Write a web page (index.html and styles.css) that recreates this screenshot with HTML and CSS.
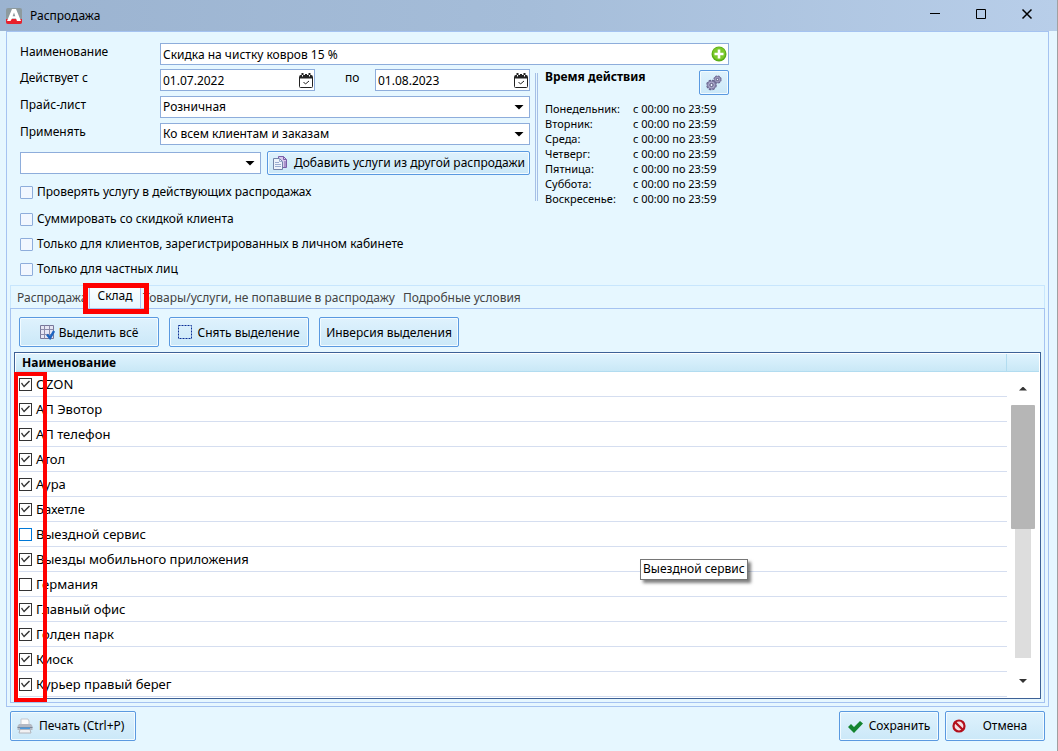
FILE: index.html
```
<!DOCTYPE html>
<html lang="ru">

<head>
    <meta charset="UTF-8">
    <meta name="viewport" content="width=device-width, initial-scale=1.0">
    <link rel="stylesheet" href="styles.css">
    <title>Распродажа</title>
</head>

<body>

    <header class="titlebar">
        <svg class="app-icon" width="16" height="16" viewBox="0 0 16 16">
            <rect width="16" height="16" rx="2" fill="#8d9a9e" />
            <path d="M0 11h16v3a2 2 0 0 1-2 2H2a2 2 0 0 1-2-2z" fill="#e8202c" />
            <path d="M6 1h4l5 12h-4l-1-2.500H6L4.500 13H1z" fill="#fff" />
            <path d="M8 4.500L9.300 8.300H6.600z" fill="#8d9a9e" />
        </svg>
        <h1>Распродажа</h1>
        <div class="window-buttons">
            <button type="button" aria-label="Свернуть">
                <svg width="12" height="12" viewBox="0 0 12 12"><path d="M1 5.500h10" stroke="#000" /></svg>
            </button>
            <button type="button" aria-label="Развернуть">
                <svg width="12" height="12" viewBox="0 0 12 12"><path d="M1.500 1.500h9v9h-9z" fill="none" stroke="#000" /></svg>
            </button>
            <button type="button" aria-label="Закрыть">
                <svg width="12" height="12" viewBox="0 0 12 12"><path d="M1.500 1.500l9 9M10.500 1.500l-9 9" stroke="#000" stroke-width="1.500" /></svg>
            </button>
        </div>
    </header>

    <main class="panel">
        <form class="sale-form">
            <div class="row row-name">
                <label class="caption" for="saleName">Наименование</label>
                <div class="field field-name">
                    <input type="text" id="saleName" value="Скидка на чистку ковров 15 %">
                    <button type="button" class="field-btn" aria-label="Добавить">
                        <svg width="16" height="16" viewBox="0 0 16 16">
                            <circle cx="8" cy="8" r="7.500" fill="#59ae16" />
                            <circle cx="8" cy="7.500" r="6.300" fill="#7cc92b" />
                            <path d="M8 3.500v9M3.500 8h9" stroke="#fff" stroke-width="2.600" />
                        </svg>
                    </button>
                </div>
            </div>

            <div class="form-columns">
                <div class="form-left">
                    <div class="row">
                        <label class="caption" for="dateFrom">Действует с</label>
                        <div class="field field-date">
                            <input type="text" id="dateFrom" value="01.07.2022">
                            <button type="button" class="field-btn" aria-label="Выбрать дату">
                                <svg width="14" height="15" viewBox="0 0 14 15">
                                    <path d="M1.500 2.500h11q1 0 1 1v10q0 1-1 1h-11q-1 0-1-1v-10q0-1 1-1z" fill="#fff" stroke="#222" />
                                    <path d="M1 2.500h12v3H1z" fill="#222" />
                                    <path d="M3.500 0v3.500M10.500 0v3.500M7 1v2" stroke="#222" stroke-width="2" />
                                    <path d="M3.500 2v1.500M10.500 2v1.500" stroke="#fff" />
                                    <path d="M4.500 9l2 2L10 8" fill="none" stroke="#222" />
                                </svg>
                            </button>
                        </div>
                        <label class="to" for="dateTo">по</label>
                        <div class="field field-date">
                            <input type="text" id="dateTo" value="01.08.2023">
                            <button type="button" class="field-btn" aria-label="Выбрать дату">
                                <svg width="14" height="15" viewBox="0 0 14 15">
                                    <path d="M1.500 2.500h11q1 0 1 1v10q0 1-1 1h-11q-1 0-1-1v-10q0-1 1-1z" fill="#fff" stroke="#222" />
                                    <path d="M1 2.500h12v3H1z" fill="#222" />
                                    <path d="M3.500 0v3.500M10.500 0v3.500M7 1v2" stroke="#222" stroke-width="2" />
                                    <path d="M3.500 2v1.500M10.500 2v1.500" stroke="#fff" />
                                    <path d="M4.500 9l2 2L10 8" fill="none" stroke="#222" />
                                </svg>
                            </button>
                        </div>
                    </div>
                    <div class="row">
                        <label class="caption" for="priceList">Прайс-лист</label>
                        <div class="field field-select">
                            <select id="priceList">
                                <option>Розничная</option>
                            </select>
                        </div>
                    </div>
                    <div class="row">
                        <label class="caption" for="applyTo">Применять</label>
                        <div class="field field-select">
                            <select id="applyTo">
                                <option>Ко всем клиентам и заказам</option>
                            </select>
                        </div>
                    </div>
                    <div class="row row-copy">
                        <div class="field field-select">
                            <select aria-label="Распродажа">
                                <option></option>
                            </select>
                        </div>
                        <button type="button" class="btn btn-copy">
                            <svg width="16" height="16" viewBox="0 0 16 16">
                                <path d="M6.500 1.500h5l3 3v8h-8z" fill="#d9c9ee" stroke="#7a5fa8" />
                                <path d="M11.500 1.500v3h3M12 7h2M12 9h2M12 11h2" fill="none" stroke="#7a5fa8" />
                                <path d="M1.500 3.500h6l3 3v8h-9z" fill="#edf3fb" stroke="#7384a8" />
                                <path d="M7.500 3.500v3h3M3 7.500h4M3 9.500h6M3 11.500h6" fill="none" stroke="#9aacd0" />
                            </svg>
                            Добавить услуги из другой распродажи
                        </button>
                    </div>

                    <div class="options">
                        <label><input type="checkbox">Проверять услугу в действующих распродажах</label>
                        <label><input type="checkbox">Суммировать со скидкой клиента</label>
                        <label><input type="checkbox">Только для клиентов, зарегистрированных в личном кабинете</label>
                        <label><input type="checkbox">Только для частных лиц</label>
                    </div>
                </div>

                <section class="schedule">
                    <div class="schedule-head">
                        <h2>Время действия</h2>
                        <button type="button" class="btn btn-gear" aria-label="Настроить время">
                            <svg width="16" height="16" viewBox="0 0 16 16">
                                <circle cx="5.500" cy="10" r="4" fill="none" stroke="#66638c" stroke-width="2.600" stroke-dasharray="2.200 .940" />
                                <circle cx="5.500" cy="10" r="4" fill="#aaa7ca" stroke="#7b78a0" />
                                <circle cx="5.500" cy="10" r="1.600" fill="#eef4ff" stroke="#55527a" />
                                <circle cx="11.500" cy="4.500" r="3" fill="none" stroke="#66638c" stroke-width="2.200" stroke-dasharray="1.700 .650" />
                                <circle cx="11.500" cy="4.500" r="3" fill="#aaa7ca" stroke="#7b78a0" />
                                <circle cx="11.500" cy="4.500" r="1.200" fill="#eef4ff" stroke="#55527a" />
                            </svg>
                        </button>
                    </div>
                    <dl>
                        <dt>Понедельник:</dt><dd>с 00:00 по 23:59</dd>
                        <dt>Вторник:</dt><dd>с 00:00 по 23:59</dd>
                        <dt>Среда:</dt><dd>с 00:00 по 23:59</dd>
                        <dt>Четверг:</dt><dd>с 00:00 по 23:59</dd>
                        <dt>Пятница:</dt><dd>с 00:00 по 23:59</dd>
                        <dt>Суббота:</dt><dd>с 00:00 по 23:59</dd>
                        <dt>Воскресенье:</dt><dd>с 00:00 по 23:59</dd>
                    </dl>
                </section>
            </div>
        </form>

        <div class="tabs" role="tablist">
            <button type="button" class="tab tab-first" role="tab">Распродажа</button>
            <div class="tab-marked">
                <button type="button" class="tab active" role="tab" aria-selected="true">Склад</button>
                <span class="mark"></span>
            </div>
            <button type="button" class="tab tab-goods" role="tab">Товары/услуги, не попавшие в распродажу</button>
            <button type="button" class="tab" role="tab">Подробные условия</button>
        </div>

        <section class="tab-page">
            <div class="toolbar">
                <button type="button" class="btn">
                    <svg width="15" height="15" viewBox="0 0 15 15">
                        <path d="M.5.500h13v13H.5z" fill="#e6e6f4" stroke="#77779a" />
                        <path d="M.5 4.500h13M.5 9.500h13M4.500.500v13M9.500.500v13" stroke="#8c8cab" />
                        <path d="M7 9.500l3 3.500 4-7" fill="none" stroke="#1c64c0" stroke-width="2.500" />
                    </svg>
                    Выделить всё
                </button>
                <button type="button" class="btn">
                    <svg width="15" height="15" viewBox="0 0 15 15">
                        <path d="M.5.500h13v13H.5z" fill="none" stroke="#0b2f96" stroke-dasharray="2 1" />
                    </svg>
                    Снять выделение
                </button>
                <button type="button" class="btn">Инверсия выделения</button>
            </div>

            <div class="list">
                <div class="list-head">
                    <span>Наименование</span>
                </div>
                <div class="list-body">
                    <ul>
                        <li><label><input type="checkbox" checked>OZON</label></li>
                        <li><label><input type="checkbox" checked>АП Эвотор</label></li>
                        <li><label><input type="checkbox" checked>АП телефон</label></li>
                        <li><label><input type="checkbox" checked>Атол</label></li>
                        <li><label><input type="checkbox" checked>Аура</label></li>
                        <li><label><input type="checkbox" checked>Бахетле</label></li>
                        <li><label><input type="checkbox" class="current">Выездной сервис</label></li>
                        <li><label><input type="checkbox" checked>Выезды мобильного приложения</label></li>
                        <li><label><input type="checkbox">Германия</label></li>
                        <li><label><input type="checkbox" checked>Главный офис</label></li>
                        <li><label><input type="checkbox" checked>Голден парк</label></li>
                        <li><label><input type="checkbox" checked>Киоск</label></li>
                        <li><label><input type="checkbox" checked>Курьер правый берег</label></li>
                    </ul>
                    <div class="scrollbar">
                        <button type="button" class="scroll-up" aria-label="Вверх"></button>
                        <div class="track"><div class="thumb"></div></div>
                        <button type="button" class="scroll-down" aria-label="Вниз"></button>
                    </div>
                    <span class="mark"></span>
                    <div class="tooltip" role="tooltip">Выездной сервис</div>
                </div>
            </div>
        </section>
    </main>

    <footer class="actions">
        <button type="button" class="btn btn-print">
            <svg width="16" height="16" viewBox="0 0 16 16">
                <path d="M4 1h7l1 2v4H4z" fill="#fbfbfb" stroke="#c5c9d0" />
                <path d="M2 6h12l1.500 2v4H.5V8z" fill="#b4b9c3" />
                <path d="M.5 9h15v1H.5z" fill="#7d8798" />
                <path d="M3 9.500h10v1.500H3z" fill="#4d9be0" />
                <path d="M3 11.500h10l1 3.500H2z" fill="#f1f1f3" stroke="#b0b4bc" />
            </svg>
            Печать (Ctrl+P)
        </button>
        <button type="button" class="btn btn-save">
            <svg width="15" height="15" viewBox="0 0 15 15">
                <path d="M0 8l3-3 3 3 6-6 3 2.500L6 14z" fill="#148430" />
            </svg>
            Сохранить
        </button>
        <button type="button" class="btn btn-cancel">
            <svg width="14" height="14" viewBox="0 0 14 14">
                <circle cx="7" cy="7" r="5.500" fill="#f6dfe2" stroke="#b3101c" stroke-width="2.200" />
                <path d="M3.200 3.200l7.600 7.600" stroke="#b3101c" stroke-width="2.200" />
            </svg>
            <span>Отмена</span>
        </button>
    </footer>

</body>

</html>
```
FILE: styles.css
```
* {
    box-sizing: border-box;
}

body {
    font-family: "Noto Sans", "Open Sans", sans-serif;
    font-size: 12px;
    line-height: 16px;
    margin: 0;
    height: 100vh;
    display: flex;
    flex-direction: column;
    background-color: #e6f7ff;
    color: #000;
    border-right: 1px solid #a0a0a0;
    overflow: hidden;
}

button,
input,
select {
    font: inherit;
    color: inherit;
    margin: 0;
}

button {
    padding: 0;
    border: none;
    background: none;
}

svg {
    display: block;
    flex: none;
}

/* title bar */

.titlebar {
    display: flex;
    align-items: center;
    flex: none;
    height: 31px;
    padding-left: 6px;
    background: linear-gradient(to right, #9bb3d0, #a5bdd9 50%, #b8cee9);
}

.titlebar h1 {
    flex: 1;
    margin: 0 0 0 8px;
    font-size: 12px;
    font-weight: normal;
}

.window-buttons {
    display: flex;
    padding: 0 7px 4px 0;
}

.window-buttons button {
    display: flex;
    justify-content: center;
    width: 46px;
}

/* main panel */

.panel {
    flex: 1;
    min-height: 0;
    display: flex;
    flex-direction: column;
    margin: 0 8px 0 6px;
    padding: 0 3px 3px;
    border: 1px solid #a5c3f1;
}

.sale-form {
    padding: 11px 0 0 10px;
}

.row {
    display: flex;
    align-items: center;
    margin-bottom: 5px;
}

.row-name {
    margin-bottom: 4px;
}

.caption {
    width: 140px;
    padding-bottom: 4px;
}

.field {
    position: relative;
    display: flex;
    align-items: center;
    height: 22px;
    border: 1px solid #8eaddb;
    background-color: #fff;
}

.field input,
.field select {
    flex: 1;
    min-width: 0;
    height: 20px;
    padding: 0 2px;
    border: none;
    outline: none;
    background: none;
    appearance: none;
}

.field-btn {
    padding: 0 1px;
}

.field-name {
    width: 569px;
}

.field-date {
    width: 155px;
}

.field-select {
    flex: 1;
}

.field-select::after {
    content: "";
    position: absolute;
    right: 5px;
    width: 10px;
    height: 5px;
    background-color: #000;
    clip-path: polygon(0 0, 100% 0, 50% 100%);
    pointer-events: none;
}

.to {
    width: 60px;
    padding: 0 0 4px 30px;
}

.form-columns {
    display: flex;
    align-items: flex-start;
}

.form-left {
    width: 510px;
}

.row-copy {
    gap: 6px;
    margin-top: 6px;
}

.row-copy .field {
    flex: none;
    width: 241px;
}

.schedule {
    width: 194px;
    margin: 4px 0 0 5px;
    padding-left: 7px;
    height: 128px;
    border-left: 3px double #a5bfe6;
}

.schedule-head {
    display: flex;
    justify-content: space-between;
    align-items: flex-start;
    height: 28px;
}

.schedule h2 {
    margin: -4px 0 0;
    font-size: 12px;
    line-height: 16px;
}

.schedule dl {
    display: grid;
    grid-template-columns: 88px 1fr;
    font-size: 11px;
    line-height: 15px;
    margin: 0;
}

.schedule dd {
    margin: 0;
}

/* buttons */

.btn {
    display: flex;
    align-items: center;
    justify-content: center;
    gap: 4px;
    height: 30px;
    border: 1px solid #5a99e0;
    border-radius: 2px;
    background: linear-gradient(#dff2fd, #cbe8f8);
    box-shadow: inset 0 0 0 1px #f2fbff;
    white-space: nowrap;
}

.btn-copy {
    flex: 1;
    height: 24px;
    gap: 6px;
}

.btn-gear {
    width: 30px;
    height: 25px;
    margin-top: -3px;
}

/* check boxes */

input[type="checkbox"] {
    appearance: none;
    flex: none;
    width: 13px;
    height: 13px;
    border: 1px solid #333;
    background-color: #fff;
}

input[type="checkbox"]:checked::before {
    content: "";
    display: block;
    width: 11px;
    height: 11px;
    background-color: #333;
    clip-path: polygon(1px 5px, 2px 4px, 4px 7px, 9px 2px, 10px 3px, 4px 9px);
}

.options {
    display: flex;
    flex-direction: column;
    gap: 9px;
    padding-top: 4px;
}

.options label {
    display: flex;
    align-items: center;
    gap: 4px;
    align-self: flex-start;
}

.options label:first-child {
    margin-bottom: 2px;
}

.options input[type="checkbox"] {
    border-color: #8eaddb;
    border-radius: 1px;
    background-color: #f1f7ff;
}

/* tabs */

.tabs {
    display: flex;
    align-items: flex-end;
    flex: none;
    height: 23px;
    margin-top: 8px;
    border: 1px solid #c8e6fd;
    border-bottom: none;
}

.tab {
    height: 20px;
    padding: 0 6px;
    color: #444;
    white-space: nowrap;
}

.tab-first {
    width: 78px;
    padding-right: 0;
    text-align: left;
    overflow: hidden;
}

.tab-marked {
    position: relative;
}

.tab.active {
    width: 52px;
    height: 24px;
    padding-bottom: 1px;
    color: #000;
    border: 1px solid #a5c3f1;
    border-bottom: none;
    background: linear-gradient(#fff, #e6f7ff);
}

.tab-goods {
    padding: 0 2px;
}

.mark {
    position: absolute;
    z-index: 2;
    border: 5px solid #f00;
    pointer-events: none;
}

.tab-marked .mark {
    inset: -1px -8px -6px -6px;
}

.tab-page {
    flex: 1;
    min-height: 0;
    display: flex;
    flex-direction: column;
    padding: 8px 3px 3px;
    border: 1px solid #a5c3f1;
}

.toolbar {
    display: flex;
    gap: 10px;
    padding: 0 0 5px 5px;
}

.toolbar .btn {
    width: 140px;
    padding-top: 1px;
}

/* warehouse list */

.list {
    flex: 1;
    min-height: 0;
    display: flex;
    flex-direction: column;
    border: 1px solid #3d6196;
    background-color: #fff;
}

.list-head {
    display: flex;
    flex: none;
    height: 18px;
    margin: 1px 1px 0;
    padding-right: 32px;
    border-bottom: 1px solid #b2dcf0;
    background: linear-gradient(#dff3fe, #c9e8f6);
    font-weight: bold;
    line-height: 18px;
}

.list-head span {
    flex: 1;
    padding-left: 6px;
    border-right: 1px solid #b2dcf0;
}

.list-body {
    position: relative;
    flex: 1;
    min-height: 0;
    display: flex;
}

.list ul {
    flex: 1;
    margin: 0;
    padding: 0 0 0 4px;
    list-style: none;
    font-size: 13px;
    overflow: hidden;
}

.list li {
    height: 25px;
    border-bottom: 1px solid #d5def0;
}

.list label {
    display: flex;
    align-items: center;
    gap: 4px;
    height: 24px;
}

input.current {
    border-color: #0078d7;
}

.scrollbar {
    display: flex;
    flex-direction: column;
    align-items: center;
    width: 33px;
    padding-right: 1px;
}

.scrollbar button {
    flex: none;
    width: 24px;
    height: 33px;
}

.scrollbar button::before {
    content: "";
    display: block;
    width: 8px;
    height: 4px;
    margin: 0 auto;
    background-color: #333;
    clip-path: polygon(50% 0, 100% 100%, 0 100%);
}

.scrollbar .scroll-down {
    height: 40px;
    padding-top: 6px;
}

.scrollbar .scroll-down::before {
    clip-path: polygon(0 0, 100% 0, 50% 100%);
}

.track {
    flex: 1;
    width: 16px;
    background-color: #ddd;
}

.thumb {
    width: 24px;
    height: 49%;
    margin-left: -4px;
    border-radius: 1px;
    background-color: #b6b6b6;
}

.list-body .mark {
    top: 0;
    bottom: -4px;
    left: -1px;
    width: 33px;
    border-width: 4px;
}

.tooltip {
    position: absolute;
    top: 187px;
    left: 625px;
    padding: 1px 2px 2px;
    border: 1px solid #767676;
    background-color: #fff;
    box-shadow: 3px 3px 3px rgba(0, 0, 0, 0.5);
}

/* bottom buttons */

.actions {
    display: flex;
    flex: none;
    gap: 6px;
    padding: 4px 12px 10px 10px;
}

.btn-print {
    justify-content: flex-start;
    width: 126px;
    gap: 6px;
    padding: 0 6px;
    margin-right: auto;
}

.btn-save,
.btn-cancel {
    width: 100px;
    gap: 6px;
}

.btn-cancel {
    justify-content: flex-start;
    padding: 0 6px;
}

.btn-cancel span {
    flex: 1;
}
```
